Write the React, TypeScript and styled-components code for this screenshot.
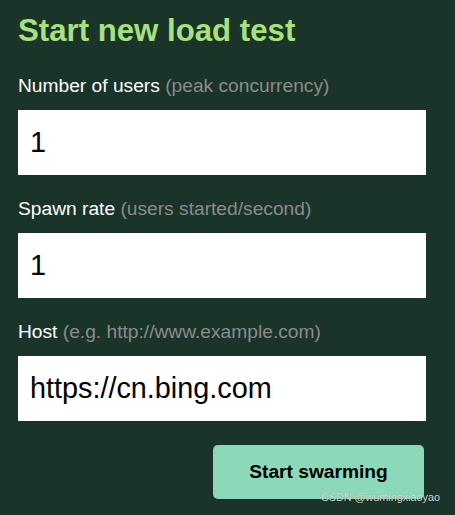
import { FC } from 'react';
import styled, { createGlobalStyle } from 'styled-components';

const GlobalStyle = createGlobalStyle`
  html, body {
    margin: 0;
    padding: 0;
    background: #1a3429;
  }
  body {
    font-family: "Liberation Sans", Arial, sans-serif;
  }
`;

interface IFieldProps {
  label: string;
  hint: string;
  value: string;
}

const Field: FC<IFieldProps> = ({ label, hint, value }: IFieldProps) => (
  <FieldWrapper>
    <Label>
      {label} <Hint>{hint}</Hint>
    </Label>
    <Input defaultValue={value} />
  </FieldWrapper>
);

const App: FC = () => {
  return (
    <Page>
      <GlobalStyle />
      <Title>Start new load test</Title>
      <Form onSubmit={(e) => e.preventDefault()}>
        <Field label="Number of users" hint="(peak concurrency)" value="1" />
        <Field label="Spawn rate" hint="(users started/second)" value="1" />
        <Field label="Host" hint="(e.g. http://www.example.com)" value="https://cn.bing.com" />
        <Actions>
          <Submit type="submit">Start swarming</Submit>
        </Actions>
      </Form>
      <Watermark>CSDN @wumingxiaoyao</Watermark>
    </Page>
  );
};

export default App;

const Page = styled.div`
  position: relative;
  width: 455px;
  height: 515px;
  box-sizing: border-box;
  padding: 13px 0 0 18px;
  background: #1a3429;
  overflow: hidden;
`;

const Title = styled.h2`
  margin: 0;
  font-size: 31.2px;
  font-weight: 700;
  color: #a6e07f;
`;

const Form = styled.form`
  display: flex;
  flex-direction: column;
  gap: 23px;
  width: 408px;
  margin-top: 26px;
`;

const FieldWrapper = styled.div`
  display: flex;
  flex-direction: column;
  gap: 13px;
`;

const Label = styled.label`
  font-size: 19.2px;
  line-height: 22px;
  height: 22px;
  color: #ffffff;
  white-space: nowrap;
`;

const Hint = styled.span`
  color: #8b8b8b;
`;

const Input = styled.input`
  box-sizing: border-box;
  width: 100%;
  height: 65px;
  margin: 0;
  padding: 0 12px;
  border: none;
  outline: none;
  background: #ffffff;
  color: #000000;
  font-family: "Liberation Sans", Arial, sans-serif;
  font-size: 28.8px;
`;

const Actions = styled.div`
  display: flex;
  justify-content: flex-end;
  padding: 1px 2px 0 0;
`;

const Submit = styled.button`
  width: 211px;
  height: 54px;
  border: none;
  border-radius: 5px;
  background: #8cd9b9;
  color: #000000;
  font-family: "Liberation Sans", Arial, sans-serif;
  font-size: 19.2px;
  font-weight: 700;
  cursor: pointer;
`;

const Watermark = styled.span`
  position: absolute;
  left: 321px;
  top: 490px;
  font-family: "Liberation Sans", Arial, sans-serif;
  font-size: 10.8px;
  line-height: 14px;
  color: rgba(232, 232, 232, 0.9);
  text-shadow: 0 0 1px rgba(0, 0, 0, 0.35);
  white-space: nowrap;
`;
